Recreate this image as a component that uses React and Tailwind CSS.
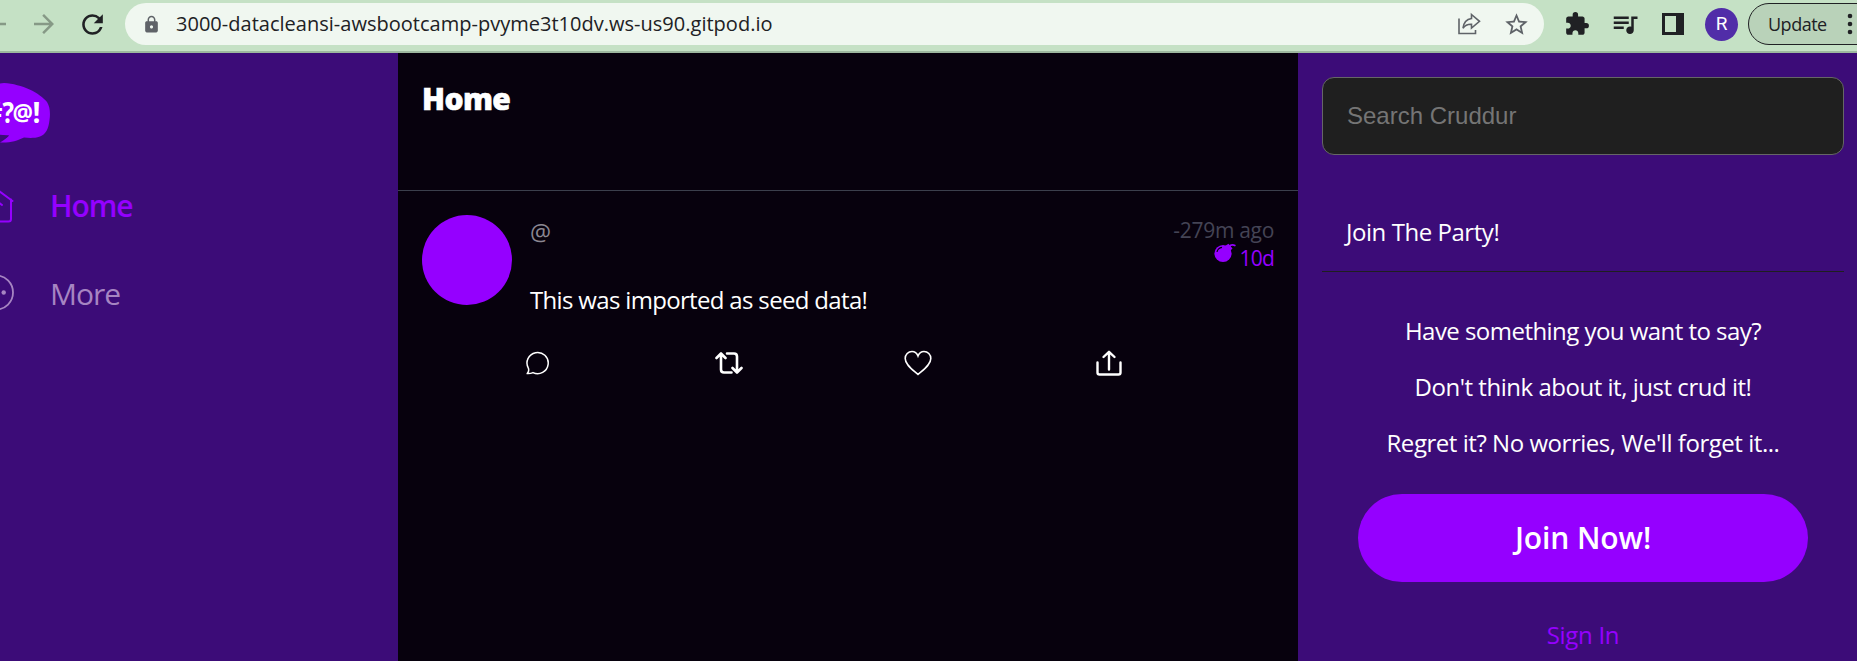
import React from "react";
import {
  MdArrowForward,
  MdArrowBack,
  MdRefresh,
  MdLock,
  MdStarBorder,
  MdExtension,
  MdQueueMusic,
} from "react-icons/md";

function ShareArrow() {
  return (
    <svg width="24" height="24" viewBox="0 0 24 24" fill="none" stroke="#5f6368" strokeWidth="1.6">
      <path d="M2 6.5V21.5H18.5V18" />
      <path d="M14.5 2.5L22.5 9.3L14.5 16V12.2C10.5 12 8 13.2 6 16.2C6.6 11 9.500 7.200 14.500 6.500Z" />
    </svg>
  );
}

function SidePanel() {
  return (
    <svg width="22" height="22" viewBox="0 0 22 22">
      <path d="M0 0H22V22H0ZM3 3V19H14V3Z" fill="#202124" fillRule="evenodd" />
    </svg>
  );
}

function BrowserBar() {
  return (
    <header className="flex h-[53px] w-full shrink-0 items-start overflow-hidden border-b-2 border-[#9db89f] bg-[#c5e1c5]">
      <div className="flex h-12 w-[125px] shrink-0 items-center">
        <MdArrowBack size={30} className="-ml-[19px] shrink-0 text-[#869986]" />
        <MdArrowForward size={30} className="ml-[18px] shrink-0 text-[#869986]" />
        <MdRefresh size={31} className="ml-[18px] shrink-0 text-[#202124]" />
      </div>
      <div className="mt-[3px] flex h-[42px] w-[1419px] shrink-0 items-center rounded-full bg-[#f0f7f0]">
        <MdLock size={19} className="ml-[17px] shrink-0 text-[#5f6368]" />
        <span className="ml-[15px] grow whitespace-nowrap text-[20px] leading-[42px] tracking-[0.015px] text-[#202124]">
          3000-datacleansi-awsbootcamp-pvyme3t10dv.ws-us90.gitpod.io
        </span>
        <ShareArrow />
        <MdStarBorder size={27} className="mr-[14px] ml-[22px] shrink-0 text-[#5f6368]" />
      </div>
      <div className="flex h-12 shrink-0 items-center text-[#202124]">
        <MdExtension size={26} className="ml-[20px]" />
        <MdQueueMusic size={30} className="ml-[20px]" />
        <span className="ml-[22px]">
          <SidePanel />
        </span>
        <span className="mt-px ml-[21px] flex size-[33px] items-center justify-center rounded-full bg-[#512da8] font-['Roboto',sans-serif] text-[19px] text-white">
          R
        </span>
      </div>
      <div className="mt-[3px] ml-[10px] flex h-[42px] w-[130px] shrink-0 items-center rounded-full border border-[#202124] bg-[#b9d2b9] text-[#202124]">
        <span className="ml-[19px] w-[76px] text-[18px] leading-[38px] tracking-[-0.5px]">Update</span>
        <svg width="12" height="24" viewBox="0 0 12 24" fill="#202124">
          <circle cx="6" cy="4" r="2.3" />
          <circle cx="6" cy="12" r="2.3" />
          <circle cx="6" cy="20" r="2.3" />
        </svg>
      </div>
    </header>
  );
}

function Logo() {
  return (
    <svg width="72" height="62" viewBox="-21 82 72 62" className="-ml-[21px]">
      <path
        d="M4 83C22 84 40 93 47 102C50 107 50.500 113 49.500 120C48.500 129 46 134 40 136.500C34 138.500 29 138 24 137.500C17 141 10 143 0 142.500C4 140 7 138 9 135.500C0 136.500-12 134-16 126C-21 112-19 84 4 83Z"
        fill="#9500ff"
      />
      <path d="M-2 134.500L9 135.500C6 138.500 2 140-2 141Z" fill="#3c0c78" />
      <g fontSize="28" fontWeight="700" fill="#ffffff">
        <text x="-14.500" y="123" textLength="17" lengthAdjust="spacingAndGlyphs">
          #
        </text>
        <text x="2.500" y="123" textLength="11.500" lengthAdjust="spacingAndGlyphs">
          ?
        </text>
        <text x="12.500" y="121" fontSize="24" textLength="20.500" lengthAdjust="spacingAndGlyphs">
          @
        </text>
        <text x="32.500" y="123" textLength="8" lengthAdjust="spacingAndGlyphs">
          !
        </text>
      </g>
    </svg>
  );
}

function Sidebar() {
  return (
    <nav className="flex w-[398px] shrink-0 flex-col overflow-hidden bg-[#3c0c78] pt-[29px]">
      <Logo />
      <a className="mt-[17px] flex h-[88px] items-center text-[#9500ff]">
        <svg
          width="38"
          height="38"
          viewBox="0 0 38 38"
          fill="none"
          stroke="currentColor"
          strokeWidth="2"
          strokeLinecap="round"
          className="-ml-[23px]"
        >
          <path d="M1.500 15L18.500 2.500L35.500 15" />
          <path d="M4 13.500V33Q4 35.500 6.500 35.500H31.500Q34 35.500 34 33V13.500" />
          <path d="M13 18.500L18.500 14L25 19" />
        </svg>
        <span className="mt-px ml-[35px] text-[30px] font-semibold tracking-[-1.1px]">Home</span>
      </a>
      <a className="flex h-[88px] items-center text-[#a685c2]">
        <svg width="38" height="38" viewBox="0 0 38 38" className="-ml-[23px]">
          <circle cx="19" cy="18.500" r="17" fill="none" stroke="currentColor" strokeWidth="1.800" />
          <circle cx="11" cy="18.500" r="2.200" fill="currentColor" />
          <circle cx="19" cy="18.500" r="2.200" fill="currentColor" />
          <circle cx="26.700" cy="18.500" r="2.200" fill="currentColor" />
        </svg>
        <span className="ml-[35px] text-[30px] tracking-[-1px]">More</span>
      </a>
    </nav>
  );
}

function BombIcon() {
  return (
    <svg width="22" height="20" viewBox="0 0 22 20" className="mb-[11px]">
      <circle cx="9" cy="10.500" r="8.600" fill="#9500ff" />
      <path d="M11 3L14.500 0.800L18.500 5.500L15.500 8.500Z" fill="#9500ff" />
      <path d="M15.500 3.500C17 1 19 1.500 21.500 2.800" fill="none" stroke="#9500ff" strokeWidth="1.800" />
      <path d="M3 9C3.500 6.500 5.500 4.700 8 4.300" fill="none" stroke="#07010d" strokeWidth="1.200" />
    </svg>
  );
}

function CommentIcon() {
  return (
    <svg width="24" height="24" viewBox="0 0 24 24" fill="none" stroke="#fff" strokeWidth="1.500" strokeLinejoin="round">
      <path d="M1.200 22.600C2.800 21 3 19.300 2.400 17.300A10.600 10.600 0 1 1 7 21.600C5.200 22.500 3.300 22.700 1.200 22.600Z" />
    </svg>
  );
}

function RepostIcon() {
  return (
    <svg
      width="28"
      height="24"
      viewBox="0 0 28 24"
      fill="none"
      stroke="#fff"
      strokeWidth="2.600"
      strokeLinecap="round"
      strokeLinejoin="round"
    >
      <path d="M1.500 7L6 2.500L10.500 7M6 3V18.500Q6 21.500 9 21.500H16.500" />
      <path d="M12 2.500H19Q22 2.500 22 5.500V21M17.500 17L22 21.500L26.500 17" />
    </svg>
  );
}

function HeartIcon() {
  return (
    <svg width="28" height="26" viewBox="0 0 28 26" fill="none" stroke="#fff" strokeWidth="1.600">
      <path d="M14 24.500C9 20 1.200 15 1.200 8.500C1.200 4.500 4.200 1.500 8 1.500C10.500 1.500 12.800 3 14 6C15.200 3 17.500 1.500 20 1.500C23.800 1.500 26.800 4.500 26.800 8.500C26.800 15 19 20 14 24.500Z" />
    </svg>
  );
}

function ShareIcon() {
  return (
    <svg
      width="26"
      height="26"
      viewBox="0 0 26 26"
      fill="none"
      stroke="#fff"
      strokeWidth="2.400"
      strokeLinecap="round"
      strokeLinejoin="round"
    >
      <path d="M1.500 12.500V22.500Q1.500 24.500 3.500 24.500H22.500Q24.500 24.500 24.500 22.500V12.500" />
      <path d="M13 19.500V2M7.500 7L13 1.800L18.500 7" />
    </svg>
  );
}

function Feed() {
  return (
    <main className="flex w-[900px] shrink-0 flex-col bg-[#07010d]">
      <div className="h-[138px] border-b border-[#3b3f4c] pt-[25px] pl-[24px]">
        <h1 className="font-['Noto_Sans','Open_Sans',sans-serif] text-[30px] leading-[42px] font-black tracking-[-0.6px] text-white [-webkit-text-stroke:0.6px_white]">
          Home
        </h1>
      </div>
      <article className="flex flex-col px-[24px] pt-[24px]">
        <div className="flex">
          <div className="size-[90px] shrink-0 rounded-full bg-[#9500ff]" />
          <div className="flex grow flex-col pl-[18px]">
            <div className="flex h-[70px] justify-between">
              <span className="pt-[2px] text-[23.500px] leading-[30px] text-[#8b8791]">@</span>
              <div className="flex flex-col items-end pt-px">
                <span className="text-[21px] leading-[28px] tracking-[-0.3px] text-[#444455]">-279m ago</span>
                <span className="flex h-[28px] items-center gap-[4px] text-[21px] leading-[28px] tracking-[-0.8px] text-[#9500ff]">
                  <BombIcon />
                  10d
                </span>
              </div>
            </div>
            <p className="text-[24px] leading-[30px] tracking-[-0.67px] text-white">This was imported as seed data!</p>
          </div>
        </div>
        <div className="mt-[34px] ml-[104px] flex h-[28px] items-center">
          <div className="w-[189px]">
            <CommentIcon />
          </div>
          <div className="w-[189px]">
            <RepostIcon />
          </div>
          <div className="w-[192px]">
            <HeartIcon />
          </div>
          <ShareIcon />
        </div>
      </article>
    </main>
  );
}

function JoinPanel() {
  return (
    <aside className="flex w-[559px] shrink-0 flex-col overflow-hidden bg-[#3c0c78] pt-[24px] pr-[13px] pl-[24px] text-white">
      <input
        type="text"
        placeholder="Search Cruddur"
        className="h-[78px] w-full shrink-0 rounded-[12px] border border-[#666666] bg-[#1f1f1f] px-[24px] font-['Liberation_Sans',sans-serif] text-[24px] placeholder:text-[#757575]"
      />
      <div className="mt-[59px] h-[58px] shrink-0 border-b border-[#1f1f1f] pl-[24px] text-[24px] leading-[36px] tracking-[-0.45px]">
        Join The Party!
      </div>
      <div className="flex flex-col items-center pt-[31px] text-[24px] leading-[56px] whitespace-nowrap">
        <p className="tracking-[-0.54px]">Have something you want to say?</p>
        <p className="tracking-[-0.47px]">Don't think about it, just crud it!</p>
        <p className="tracking-[-0.46px]">Regret it? No worries, We'll forget it...</p>
        <button className="mt-[23px] h-[88px] w-[450px] rounded-full bg-[#9500ff] text-[30px] font-semibold tracking-[-0.1px]">
          Join Now!
        </button>
        <a className="mt-[25px] tracking-[-0.3px] text-[#9500ff]">Sign In</a>
      </div>
    </aside>
  );
}

export default function App() {
  return (
    <div className="flex h-[661px] w-[1857px] flex-col overflow-hidden bg-[#07010d] font-['Open_Sans','Noto_Sans',sans-serif]">
      <BrowserBar />
      <div className="flex min-h-0 grow">
        <Sidebar />
        <Feed />
        <JoinPanel />
      </div>
    </div>
  );
}
